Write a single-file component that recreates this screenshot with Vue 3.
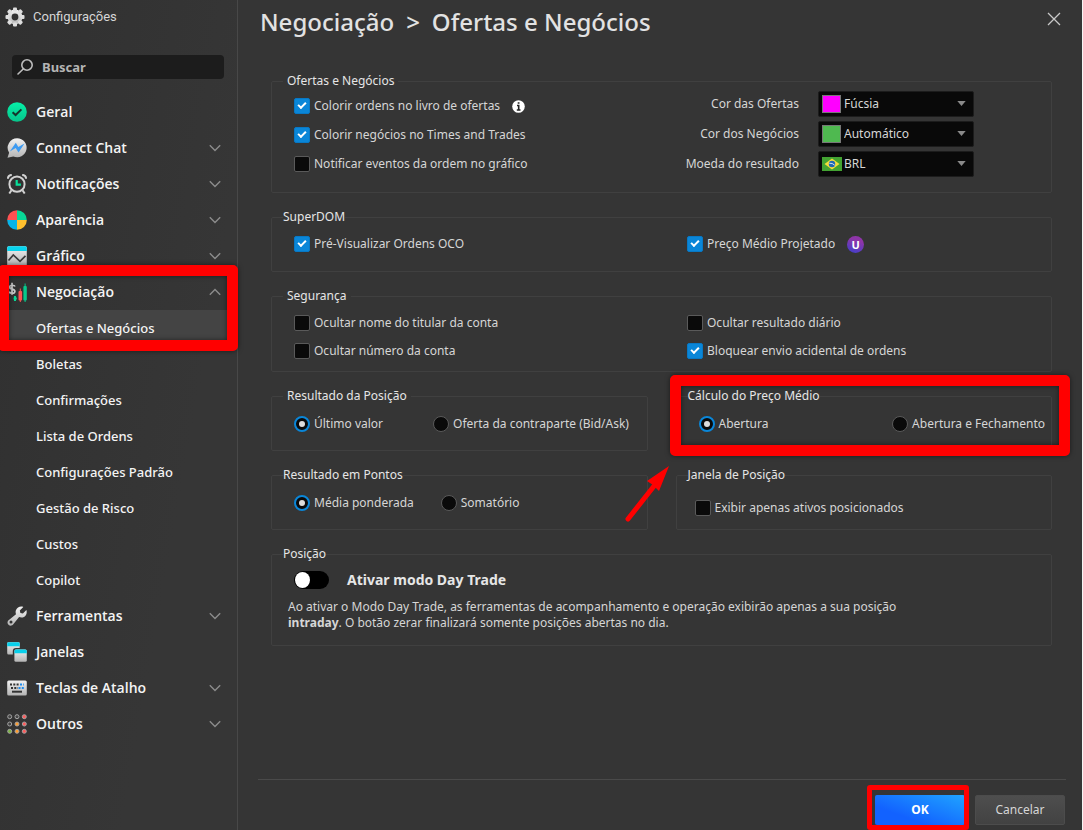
<script setup>
import { ref } from 'vue'

const search = ref('')
const top = [
  { id: 'geral', label: 'Geral' },
  { id: 'chat', label: 'Connect Chat', more: true },
  { id: 'notif', label: 'Notificações', more: true },
  { id: 'apar', label: 'Aparência', more: true },
  { id: 'graf', label: 'Gráfico', more: true },
  {
    id: 'neg',
    label: 'Negociação',
    more: true,
    open: true,
    children: [
      'Ofertas e Negócios',
      'Boletas',
      'Confirmações',
      'Lista de Ordens',
      'Configurações Padrão',
      'Gestão de Risco',
      'Custos',
      'Copilot'
    ]
  },
  { id: 'ferr', label: 'Ferramentas', more: true },
  { id: 'jan', label: 'Janelas' },
  { id: 'tec', label: 'Teclas de Atalho', more: true },
  { id: 'out', label: 'Outros', more: true }
]
const dots = [
  ['', '', '#ff5a5a'],
  ['', '#ff9d2e', '#ff5a5a'],
  ['#7cb342', '#ff9d2e', '#ff5a5a']
]

const colorirOrdens = ref(true)
const colorirNegocios = ref(true)
const notificar = ref(false)
const oco = ref(true)
const projetado = ref(true)
const ocultarNome = ref(false)
const ocultarNumero = ref(false)
const ocultarResultado = ref(false)
const bloquear = ref(true)
const exibir = ref(false)
const dayTrade = ref(false)
const posicao = ref('ultimo')
const pontos = ref('media')
const calculo = ref('abertura')
const corOfertas = ref('Fúcsia')
const corNegocios = ref('Automático')
const moeda = ref('BRL')
</script>

<template>
  <div class="window">
    <svg class="defs" width="0" height="0" aria-hidden="true">
      <defs>
        <linearGradient id="silver" x1="0" y1="0" x2="0" y2="1">
          <stop offset="0" stop-color="#f2f2f2" />
          <stop offset="1" stop-color="#b4b4b4" />
        </linearGradient>
        <linearGradient id="mint" x1="0" y1="0" x2="0" y2="1">
          <stop offset="0" stop-color="#05f0a8" />
          <stop offset="1" stop-color="#07c48a" />
        </linearGradient>
      </defs>
    </svg>

    <aside class="sidebar">
      <div class="brand">
        <svg width="20" height="20" viewBox="0 0 20 20" aria-hidden="true">
          <g fill="url(#silver)">
            <path fill-rule="evenodd" d="M10 2.5a7.5 7.5 0 1 0 0 15a7.5 7.5 0 0 0 0-15ZM10 6.6a3.4 3.4 0 1 1 0 6.8a3.4 3.4 0 0 1 0-6.8Z" />
          </g>
          <g fill="#dedede">
            <rect v-for="n in 8" :key="n" x="8" y="0.5" width="4" height="4" rx="1" :transform="`rotate(${n * 45} 10 10)`" />
          </g>
        </svg>
        <span>Configurações</span>
      </div>

      <label class="search">
        <svg width="18" height="18" viewBox="0 0 18 18" fill="none" stroke="#bdbdbd" stroke-width="1.6" stroke-linecap="round" aria-hidden="true">
          <circle cx="11" cy="7" r="5.2" />
          <path d="M7.2 11 2 16" />
        </svg>
        <input v-model="search" type="text" placeholder="Buscar" aria-label="Buscar" />
      </label>

      <nav>
        <div v-for="item in top" :key="item.id" class="group">
          <a class="item" href="#">
            <svg class="icon" width="20" height="20" viewBox="0 0 20 20" aria-hidden="true">
              <g v-if="item.id === 'geral'">
                <circle cx="10" cy="10" r="9.8" fill="url(#mint)" />
                <path d="m5.6 10.2 3 2.8 5.8-5.6" fill="none" stroke="#14352b" stroke-width="2" />
              </g>
              <g v-else-if="item.id === 'chat'">
                <path d="M10.2.3a9.5 9.5 0 1 1-3.9 18.2L.5 19.7l1.6-4.9A9.5 9.5 0 0 1 10.2.3Z" fill="url(#silver)" />
                <path d="m2.8 13.600 6-8.900 2.500 4.300 6.200-3.500-6 9-2.800-4.600Z" fill="#3d9bf2" />
              </g>
              <g v-else-if="item.id === 'notif'" fill="none" stroke="#d2d2d2">
                <circle cx="10" cy="10.2" r="7.6" stroke-width="2" />
                <path d="M.9 4.8C1 2.3 2.500 1 4.800.9M19.100 4.800C19 2.300 17.500 1 15.200.9M4.500 16.200 2.300 19.500M15.500 16.200l2.200 3.300" stroke-width="2" />
                <path d="M9.700 6v4.700h4.200" stroke="#07e09a" stroke-width="2.200" />
              </g>
              <g v-else-if="item.id === 'apar'">
                <path d="M10 10V.2A9.8 9.8 0 0 0 .2 10Z" fill="#ff5252" />
                <path d="M10 10h9.800A9.800 9.800 0 0 0 10 .2Z" fill="#08d897" />
                <path d="M10 10v9.800A9.800 9.800 0 0 0 19.800 10Z" fill="#ffc02e" />
                <path d="M10 10H.2A9.800 9.800 0 0 0 10 19.800Z" fill="#08b4e8" />
              </g>
              <g v-else-if="item.id === 'graf'">
                <rect x=".2" y=".2" width="19.600" height="19.600" rx="1.500" fill="url(#silver)" />
                <path d="M.2 5V1.700Q.2.2 1.700.2h16.600q1.500 0 1.500 1.500V5Z" fill="#08d4ee" />
                <path d="m1.500 14.500 4.800-5.500 6.700 6.300 5.500-5.500" fill="none" stroke="#3b3b3b" stroke-width="1.700" />
              </g>
              <g v-else-if="item.id === 'neg'">
                <path d="M8 4.600C7.500 3 2.800 2.500 2.600 5c-.2 2.600 5.500 1.600 5.300 4.500-.2 2.500-5 2.200-5.800.1M5 .8v12" fill="none" stroke="#c9c9c9" stroke-width="1.700" />
                <path d="M8 14v5M6.600 16.500h3.200" stroke="#07d795" stroke-width="2" />
                <rect x="11.500" y="9" width="3.600" height="9.500" rx="1" fill="#ff5252" />
                <path d="M13.300 6.500V20" stroke="#ff5252" stroke-width="1" />
                <rect x="16.400" y="4" width="3.400" height="14.500" rx="1" fill="#07c98c" />
                <path d="M18.100 1.500V20" stroke="#07c98c" stroke-width="1" />
              </g>
              <g v-else-if="item.id === 'ferr'">
                <path fill="url(#silver)" fill-rule="evenodd" d="M16.300.9 12.800 4.400l.6 2.500 2.500.6 3.500-3.400c1 3.300-.5 6.600-3.600 7.300-1.300.3-2.700.1-3.700-.3l-5.800 7.200c-1.500 1.900-3.600 1.600-4.800.5C.2 17.500 0 15.300 1.900 13.900l7.100-5.600c-.5-1.300-.6-2.700-.1-4C10 1.200 13.400-.2 16.300.9ZM4 14.600a1.500 1.500 0 1 0 0 3a1.500 1.500 0 0 0 0-3Z" />
              </g>
              <g v-else-if="item.id === 'jan'">
                <path d="M.2 1.500Q.2.2 1.500.2h10q1.200 0 1.200 1.300V6H9Q5.800 6 5.800 9v3.500H1.500Q.2 12.500.2 11Z" fill="url(#silver)" />
                <path d="M.2 4.200V1.500Q.2.2 1.500.2h10q1.200 0 1.200 1.300v2.700Z" fill="#08cfea" />
                <rect x="7.400" y="7.400" width="12.400" height="12.400" rx="1.500" fill="url(#silver)" />
                <path d="M7.400 11.200V8.900q0-1.500 1.500-1.500h9.400q1.500 0 1.500 1.500v2.300Z" fill="#08cfea" />
              </g>
              <g v-else-if="item.id === 'tec'">
                <rect x=".2" y="2.500" width="19.600" height="15" rx="1.500" fill="url(#silver)" />
                <path d="M3 6.500h9" stroke="#333" stroke-width="2" stroke-dasharray="2 1.300" />
                <path d="M13 6.500h4" stroke="#1c8cf0" stroke-width="2" stroke-dasharray="2 1.300" />
                <path d="M4 10h7" stroke="#333" stroke-width="2" stroke-dasharray="2 1.300" />
                <path d="M11.500 10h6" stroke="#1c8cf0" stroke-width="2" stroke-dasharray="2 1.300" />
                <path d="M5 13.700h10" stroke="#333" stroke-width="2" />
              </g>
              <g v-else>
                <template v-for="(row, r) in dots" :key="r">
                  <circle v-for="(c, i) in row" :key="i" :cx="2.700 + i * 7.300" :cy="2.700 + r * 7.300" r="2" :fill="c || '#444'" stroke="#a5a5a5" stroke-width="1" />
                </template>
              </g>
            </svg>
            <span>{{ item.label }}</span>
            <svg v-if="item.more" class="chev" width="12" height="8" viewBox="0 0 12 8" fill="none" stroke="#8c8c8c" stroke-width="1.400" aria-hidden="true">
              <path :d="item.open ? 'm.8 6.700 5.200-5.200 5.200 5.200' : 'm.8 1.300 5.200 5.200 5.200-5.200'" />
            </svg>
          </a>
          <template v-if="item.children">
            <a v-for="(child, i) in item.children" :key="child" class="sub" :class="{ active: i === 0 }" href="#">{{ child }}</a>
            <div class="mark mark-nav"></div>
          </template>
        </div>
      </nav>
    </aside>

    <main>
      <header>
        <h1><span>Negociação</span> <span>&gt;</span> <span>Ofertas e Negócios</span></h1>
        <button class="close" type="button" aria-label="Fechar">
          <svg width="14" height="14" viewBox="0 0 14 14" stroke="#c8c8c8" stroke-width="1.300" aria-hidden="true">
            <path d="m1 1 12 12M13 1 1 13" />
          </svg>
        </button>
      </header>

      <form class="panels" @submit.prevent>
        <fieldset class="offers">
          <legend class="inset">Ofertas e Negócios</legend>
          <div class="cols">
            <div class="stack">
              <div class="line">
                <label class="opt"><input v-model="colorirOrdens" type="checkbox" />Colorir ordens no livro de ofertas</label>
                <svg width="13" height="13" viewBox="0 0 13 13" role="img" aria-label="Informação">
                  <circle cx="6.500" cy="6.500" r="6.300" fill="#fff" />
                  <path d="M5 5.500h1.700v4.300M4.800 10h3.700M5.700 3h1.800" stroke="#222" stroke-width="1.600" fill="none" />
                </svg>
              </div>
              <label class="opt"><input v-model="colorirNegocios" type="checkbox" />Colorir negócios no Times and Trades</label>
              <label class="opt"><input v-model="notificar" type="checkbox" />Notificar eventos da ordem no gráfico</label>
            </div>
            <div class="selects">
              <label for="cor-ofertas">Cor das Ofertas</label>
              <div class="select">
                <span class="swatch fuchsia"></span>
                <select id="cor-ofertas" v-model="corOfertas"><option>Fúcsia</option></select>
                <svg class="caret" width="9" height="5" viewBox="0 0 10 6" aria-hidden="true"><path d="M0 0h10L5 6Z" fill="#8a8a8a" /></svg>
              </div>
              <label for="cor-negocios">Cor dos Negócios</label>
              <div class="select">
                <span class="swatch green"></span>
                <select id="cor-negocios" v-model="corNegocios"><option>Automático</option></select>
                <svg class="caret" width="9" height="5" viewBox="0 0 10 6" aria-hidden="true"><path d="M0 0h10L5 6Z" fill="#8a8a8a" /></svg>
              </div>
              <label for="moeda">Moeda do resultado</label>
              <div class="select">
                <svg class="flag" width="20" height="14" viewBox="0 0 20 14" aria-hidden="true">
                  <rect width="20" height="14" fill="#43a332" />
                  <path d="M10 1.500 17.500 7 10 12.500 2.500 7Z" fill="#f4dc3c" />
                  <circle cx="10" cy="7" r="3.200" fill="#1f67b5" />
                  <path d="M7.200 6.200q3.200-.4 5.500 2" stroke="#e8eef4" stroke-width=".9" fill="none" />
                </svg>
                <select id="moeda" v-model="moeda"><option>BRL</option></select>
                <svg class="caret" width="9" height="5" viewBox="0 0 10 6" aria-hidden="true"><path d="M0 0h10L5 6Z" fill="#8a8a8a" /></svg>
              </div>
            </div>
          </div>
        </fieldset>

        <fieldset>
          <legend>SuperDOM</legend>
          <div class="cols">
            <label class="opt"><input v-model="oco" type="checkbox" />Pré-Visualizar Ordens OCO</label>
            <div class="line">
              <label class="opt"><input v-model="projetado" type="checkbox" />Preço Médio Projetado</label>
              <span class="badge">U</span>
            </div>
          </div>
        </fieldset>

        <fieldset class="security">
          <legend class="inset">Segurança</legend>
          <div class="cols">
            <label class="opt"><input v-model="ocultarNome" type="checkbox" />Ocultar nome do titular da conta</label>
            <label class="opt"><input v-model="ocultarResultado" type="checkbox" />Ocultar resultado diário</label>
            <label class="opt"><input v-model="ocultarNumero" type="checkbox" />Ocultar número da conta</label>
            <label class="opt"><input v-model="bloquear" type="checkbox" />Bloquear envio acidental de ordens</label>
          </div>
        </fieldset>

        <div class="pair">
          <fieldset>
            <legend class="inset">Resultado da Posição</legend>
            <div class="radios wide">
              <label class="opt"><input v-model="posicao" type="radio" name="posicao" value="ultimo" />Último valor</label>
              <label class="opt"><input v-model="posicao" type="radio" name="posicao" value="oferta" />Oferta da contraparte (Bid/Ask)</label>
            </div>
          </fieldset>
          <div class="marked">
            <fieldset>
              <legend>Cálculo do Preço Médio</legend>
              <div class="radios spread">
                <label class="opt"><input v-model="calculo" type="radio" name="calculo" value="abertura" />Abertura</label>
                <label class="opt"><input v-model="calculo" type="radio" name="calculo" value="ambos" />Abertura e Fechamento</label>
              </div>
            </fieldset>
            <div class="mark mark-calc"></div>
            <svg class="arrow" width="50" height="62" viewBox="0 0 50 62" aria-hidden="true">
              <path d="M7 57 37 19" stroke="#f00" stroke-width="5" stroke-linecap="round" />
              <path d="M48 4 26 19l6 4 6 6Z" fill="#f00" />
            </svg>
          </div>
          <fieldset>
            <legend>Resultado em Pontos</legend>
            <div class="radios">
              <label class="opt"><input v-model="pontos" type="radio" name="pontos" value="media" />Média ponderada</label>
              <label class="opt"><input v-model="pontos" type="radio" name="pontos" value="soma" />Somatório</label>
            </div>
          </fieldset>
          <fieldset class="window-pos">
            <legend>Janela de Posição</legend>
            <label class="opt"><input v-model="exibir" type="checkbox" />Exibir apenas ativos posicionados</label>
          </fieldset>
        </div>

        <fieldset class="position">
          <legend>Posição</legend>
          <label class="toggle"><input v-model="dayTrade" type="checkbox" role="switch" />Ativar modo Day Trade</label>
          <p>Ao ativar o Modo Day Trade, as ferramentas de acompanhamento e operação exibirão apenas a sua posição <b>intraday</b>. O botão zerar finalizará somente posições abertas no dia.</p>
        </fieldset>
      </form>

      <footer>
        <div class="ok-wrap">
          <button class="btn ok" type="button">OK</button>
          <div class="mark mark-ok"></div>
        </div>
        <button class="btn" type="button">Cancelar</button>
      </footer>
    </main>
  </div>
</template>

<style>
body {
  background: #353535;
}
</style>

<style scoped>
* {
  box-sizing: border-box;
}
.window {
  display: flex;
  min-height: 100vh;
  overflow: hidden;
  background: #353535;
  border-right: 1px solid #f4f4f4;
  color: #d6d6d6;
  font: 12px/16px "Noto Sans", "Open Sans", sans-serif;
}
.defs {
  position: absolute;
}
.sidebar {
  flex: 0 0 238px;
  min-width: 0;
  border-right: 1px solid #484848;
  background: linear-gradient(100deg, #303030, #363636 70%);
}
.brand {
  display: flex;
  align-items: center;
  gap: 8px;
  height: 33px;
  padding-left: 5px;
  font: 13px/16px Roboto, sans-serif;
}
.search {
  display: flex;
  align-items: center;
  gap: 8px;
  height: 24px;
  margin: 22px 13px 15px 12px;
  padding-left: 4px;
  border-radius: 4px;
  background: #1c1c1c;
}
.search input {
  flex: 1;
  min-width: 0;
  padding: 0;
  border: 0;
  outline: 0;
  background: none;
  color: #c4c4c4;
  font: bold 13px/20px "Noto Sans", sans-serif;
}
.search input::placeholder {
  color: #b4b4b4;
}
.group {
  position: relative;
}
.item,
.sub {
  display: flex;
  align-items: center;
  height: 36px;
  color: #f4f4f4;
  text-decoration: none;
  font: 600 14px/20px "Open Sans", sans-serif;
}
.item {
  gap: 9px;
  padding: 0 16px 0 7px;
}
.icon {
  flex: none;
}
.chev {
  margin-left: auto;
}
.sub {
  padding-left: 36px;
  font: 500 13px/20px "Noto Sans", sans-serif;
}
.active {
  background: #444;
}
.mark {
  position: absolute;
  border: 11px solid #f00;
  border-radius: 5px;
  pointer-events: none;
  box-shadow: 0 0 5px rgba(0, 0, 0, 0.5), inset 0 0 5px rgba(0, 0, 0, 0.5);
}
.mark-nav {
  top: -9px;
  left: -2px;
  right: -1px;
  height: 86px;
}
main {
  flex: 1;
  min-width: 0;
  display: flex;
  flex-direction: column;
}
header {
  display: flex;
  justify-content: space-between;
  align-items: flex-start;
  height: 73px;
  padding: 6px 21px 0 22px;
}
h1 {
  display: flex;
  gap: 12px;
  margin: 0;
  color: #e2e2e2;
  font: 500 24px/32px "Noto Sans", sans-serif;
}
.close {
  display: flex;
  margin-top: 6px;
  padding: 0;
  border: 0;
  background: none;
}
.panels {
  display: flex;
  flex-direction: column;
  gap: 16px;
  margin: 0 30px 0 33px;
}
fieldset {
  min-width: 0;
  margin: 0;
  padding: 11px 6px 19px 22px;
  border: 1px solid #404040;
  border-radius: 2px;
}
legend {
  margin-left: -11px;
  padding: 0;
  color: #e6e6e6;
}
legend.inset {
  padding: 0 4px;
}
.cols {
  display: grid;
  grid-template-columns: 1fr 1fr;
  gap: 12px 35px;
}
.offers {
  padding: 2px 77px 15px 22px;
}
.offers .cols {
  grid-template-columns: 1fr auto;
}
.security {
  padding-bottom: 12px;
}
.stack {
  display: flex;
  flex-direction: column;
  gap: 13px;
  padding-top: 7px;
}
.line {
  display: flex;
  align-items: center;
  gap: 12px;
  height: 16px;
}
.opt {
  display: flex;
  align-items: center;
  gap: 4px;
  height: 16px;
  white-space: nowrap;
}
.opt input {
  appearance: none;
  position: relative;
  flex: none;
  width: 16px;
  height: 16px;
  margin: 0;
  border: 1px solid #5a5a5a;
  border-radius: 2px;
  background: #0a0a0a;
}
.opt input[type="checkbox"]:checked {
  border-color: #0878c4;
  background: #0a86d8;
}
.opt input[type="checkbox"]:checked::after {
  content: "";
  position: absolute;
  top: 3px;
  left: 3px;
  width: 8px;
  height: 5px;
  box-sizing: border-box;
  border: solid #fff;
  border-width: 0 0 2px 2px;
  transform: rotate(-45deg);
}
.opt input[type="radio"] {
  border-radius: 50%;
}
.opt input[type="radio"]:checked {
  border: 2px solid #0a86d8;
}
.opt input[type="radio"]:checked::after {
  content: "";
  position: absolute;
  inset: 3px;
  border-radius: 50%;
  background: #dcdcdc;
}
.selects {
  display: grid;
  grid-template-columns: auto 156px;
  gap: 4px 19px;
  align-items: center;
  text-align: right;
}
.select {
  position: relative;
}
.select select {
  appearance: none;
  display: block;
  width: 100%;
  height: 26px;
  padding: 0 24px 0 25px;
  border: 1px solid #1c1c1c;
  border-radius: 2px;
  background: #090909;
  color: #d6d6d6;
  font: inherit;
}
.swatch,
.flag,
.caret {
  position: absolute;
  pointer-events: none;
}
.swatch {
  top: 4px;
  left: 4px;
  width: 19px;
  height: 18px;
  border: 1px solid #777;
}
.fuchsia {
  background: #f0f;
}
.green {
  background: #4fb950;
}
.flag {
  top: 6px;
  left: 4px;
}
.caret {
  top: 10px;
  right: 8px;
}
.badge {
  width: 17px;
  height: 17px;
  border-radius: 50%;
  background: linear-gradient(20deg, #3b3fd0, #8e35a8 70%);
  color: #fff;
  font: bold 11px/17px "Noto Sans", sans-serif;
  text-align: center;
}
.pair {
  display: grid;
  grid-template-columns: 1fr 1fr;
  gap: 16px 28px;
}
.pair fieldset {
  padding-top: 12px;
  padding-bottom: 18px;
}
.radios {
  display: flex;
  gap: 27px;
}
.wide {
  gap: 50px;
}
.spread {
  justify-content: space-between;
}
.marked {
  position: relative;
}
.mark-calc {
  inset: -13px -18px -5px -6px;
}
.arrow {
  position: absolute;
  top: 74px;
  left: -55px;
}
.pair .window-pos {
  padding: 17px 6px 13px 18px;
}
.window-pos legend {
  margin-left: -7px;
}
.position {
  padding: 8px 120px 14px 16px;
}
.position legend {
  margin-left: -5px;
}
.toggle {
  display: flex;
  align-items: center;
  gap: 18px;
  height: 20px;
  padding-left: 6px;
  color: #e6e6e6;
  font: bold 14px/20px "Noto Sans", sans-serif;
}
.toggle input {
  appearance: none;
  position: relative;
  width: 35px;
  height: 18px;
  margin: 0;
  border-radius: 9px;
  background: #000;
}
.toggle input::after {
  content: "";
  position: absolute;
  top: 1px;
  left: 1px;
  width: 15px;
  height: 16px;
  border-radius: 50%;
  background: #fff;
}
.toggle input:checked::after {
  left: 19px;
}
p {
  margin: 9px 0 0;
}
footer {
  display: flex;
  justify-content: flex-end;
  gap: 10px;
  margin: auto 16px 0 20px;
  padding: 15px 1px 5px;
  border-top: 1px solid #4a4a4a;
}
.btn {
  display: block;
  width: 90px;
  height: 30px;
  padding: 0;
  border: 1px solid #4c4c4c;
  border-radius: 2px;
  background: linear-gradient(#4e4e4e, #424242);
  color: #d6d6d6;
  font: 12px/16px "Noto Sans", sans-serif;
}
.ok-wrap {
  position: relative;
}
.ok {
  border: 0;
  background: linear-gradient(20deg, #1262ff 30%, #20a4ff);
  color: #fff;
  font-weight: bold;
}
.mark-ok {
  inset: -10px -4px -5px -8px;
  border-width: 5px;
  border-radius: 3px;
  box-shadow: none;
}
</style>
